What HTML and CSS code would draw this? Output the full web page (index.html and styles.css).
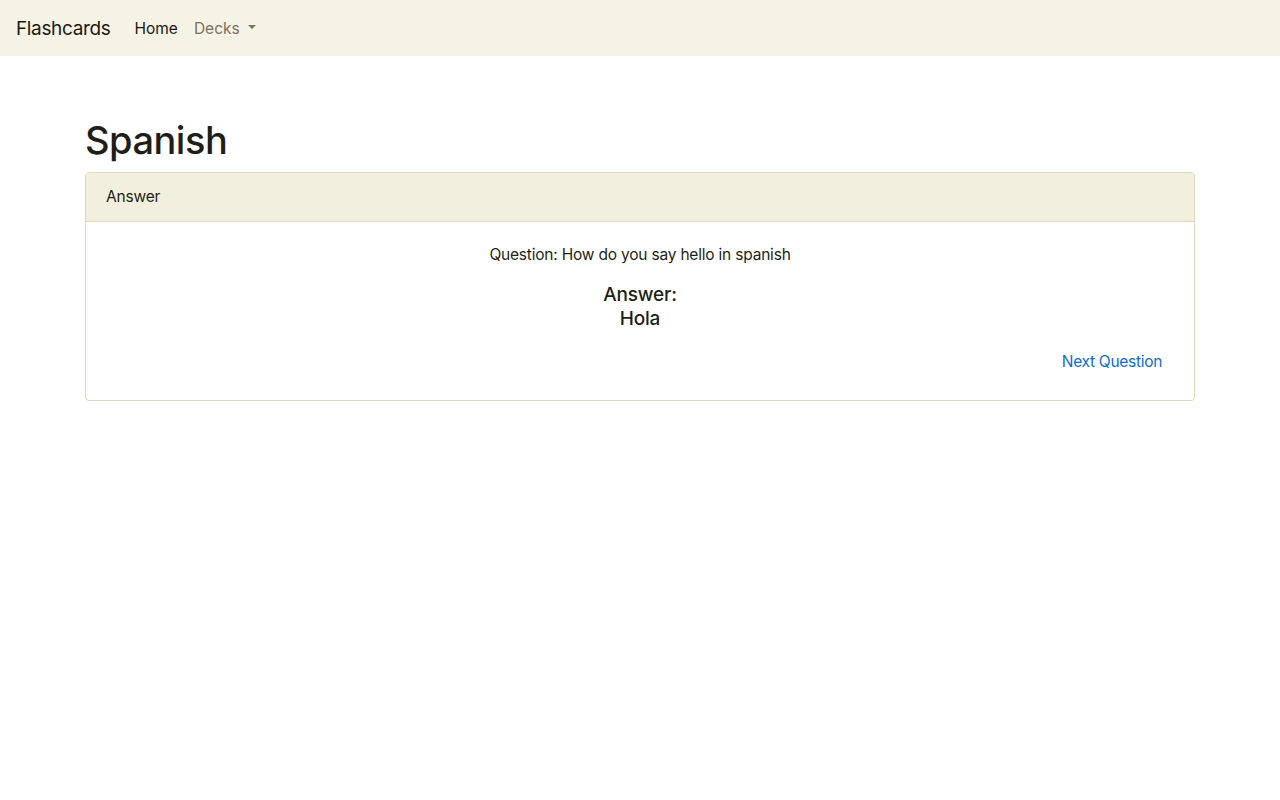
FILE: index.html
```html
<!DOCTYPE html>
<html lang="en">
<head>
<meta charset="utf-8">
<title>Flashcards</title>
<link rel="stylesheet" href="styles.css">
</head>
<body>
<nav class="navbar">
  <a class="brand" href="#">Flashcards</a>
  <ul class="nav">
    <li><a class="nav-link active" href="#">Home</a></li>
    <li><a class="nav-link muted" href="#">Decks<span class="caret"></span></a></li>
  </ul>
</nav>
<main class="container">
  <h1 class="title">Spanish</h1>
  <section class="card">
    <div class="card-header">Answer</div>
    <div class="card-body">
      <p class="question">Question: How do you say hello in spanish</p>
      <h5 class="answer">Answer:<br>Hola</h5>
      <div class="actions">
        <button class="btn-link" type="button">Next Question</button>
      </div>
    </div>
  </section>
</main>
</body>
</html>
```

FILE: styles.css
```css
* { box-sizing: border-box; }
body {
  margin: 0;
  font-family: Inter, "Liberation Sans", sans-serif;
  font-size: 16px;
  line-height: 24px;
  color: #231f14;
  background: #fff;
}
.navbar {
  height: 56px;
  background: #f5f2e6;
  display: flex;
  align-items: center;
  padding: 0 16px;
}
.brand {
  font-size: 19px;
  line-height: 30px;
  color: #1d1a12;
  text-decoration: none;
  margin-right: 16px;
  letter-spacing: -0.35px;
  margin-top: 1px;
}
.nav {
  list-style: none;
  display: flex;
  margin: 0;
  padding: 0;
  margin-top: 1px;
}
.nav-link {
  display: inline-flex;
  align-items: center;
  padding: 8px;
  text-decoration: none;
  font-size: 15.5px;
  line-height: 24px;
  letter-spacing: 0;
}
.nav-link.active { color: #1d1a12; padding-left: 8px; }
.nav-link.muted { color: #7b6f5e; }
.caret {
  display: inline-block;
  margin-left: 8px;
  margin-bottom: 3px;
  border-top: 4.5px solid #7b6f5e;
  border-left: 4.5px solid transparent;
  border-right: 4.5px solid transparent;
}
.container {
  width: 1140px;
  margin: 0 auto;
  padding: 60px 15px 0;
}
.title {
  margin: 0 0 8px;
  font-size: 38px;
  font-weight: 500;
  line-height: 48px;
  color: #1f1e19;
  letter-spacing: -0.5px;
}
.card {
  border: 1px solid #e2d6bd;
  border-radius: 4px;
  overflow: hidden;
}
.card-header {
  background: #f2efde;
  padding: 12px 20px;
  border-bottom: 1px solid #e2d6bd;
  font-size: 15.5px;
  line-height: 24px;
  letter-spacing: -0.2px;
}
.card-body {
  padding: 21px 20px 20px;
  text-align: center;
}
.question {
  margin: 0 0 16px;
  font-size: 15.5px;
  line-height: 24px;
  letter-spacing: -0.2px;
}
.answer {
  margin: 0 0 13px;
  font-size: 19px;
  font-weight: 500;
  line-height: 24px;
  letter-spacing: -0.2px;
}
.actions {
  display: flex;
  justify-content: flex-end;
}
.btn-link {
  background: none;
  border: 0;
  padding: 6px 12px;
  font: inherit;
  font-size: 15.5px;
  line-height: 24px;
  color: #0b6bd6;
  letter-spacing: -0.3px;
  cursor: pointer;
}
```
